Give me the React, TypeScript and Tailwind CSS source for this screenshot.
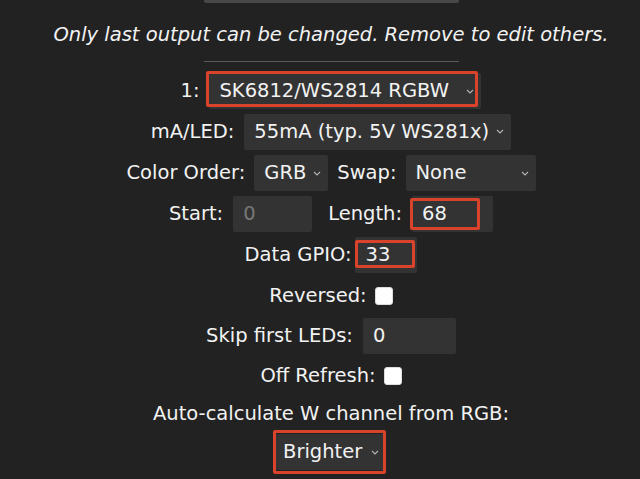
import React from "react";

const font = { fontFamily: '"DejaVu Sans", Verdana, sans-serif' };

const Chevron = () => (
  <svg width="8" height="5" viewBox="0 0 8 5" className="shrink-0">
    <path d="M1 1 L4 4 L7 1" fill="none" stroke="#b5b5b5" strokeWidth="1.1" />
  </svg>
);

const Mark: React.FC<{ className: string }> = ({ className }) => (
  <div className={"absolute border-[3px] border-[#d9432c] rounded-[2px] pointer-events-none " + className} />
);

const Select: React.FC<{ value: string; w: string; mark?: string; pl?: string }> = ({ value, w, mark, pl = "pl-[10px]" }) => (
  <div className={"relative h-[36px] bg-[#333] rounded-[2px] flex items-center justify-between pr-[7px] " + pl + " " + w}>
    <span className="text-[#f2f2f2] whitespace-nowrap">{value}</span>
    <Chevron />
    {mark && <Mark className={mark} />}
  </div>
);

const Input: React.FC<{ value: string; w: string; dim?: boolean; mark?: string }> = ({ value, w, dim, mark }) => (
  <div className={"relative h-[36px] bg-[#333] rounded-[2px] flex items-center pl-[10px] " + w}>
    <span className={dim ? "text-[#777]" : "text-[#f2f2f2]"}>{value}</span>
    {mark && <Mark className={mark} />}
  </div>
);

const Check = () => <div className="w-[18px] h-[18px] bg-white rounded-[3px] border border-[#ddd]" />;

const Row: React.FC<{ children: React.ReactNode; h: string; gap?: string }> = ({ children, h, gap = "gap-[10px]" }) => (
  <div className={"flex items-center justify-center " + h + " " + gap}>{children}</div>
);

export default function App() {
  return (
    <div className="w-[640px] h-[479px] overflow-hidden bg-[#222] text-[#f2f2f2] text-[19.5px] pl-[22px]" style={font}>
      <div className="flex flex-col items-center">
        <div className="w-[255px] h-[3px] bg-[#474747] rounded-b-[2px]" />
        <p className="mt-[19px] leading-[26px] italic whitespace-nowrap">
          Only last output can be changed. Remove to edit others.
        </p>
        <div className="mt-[13px] w-[255px] h-px bg-[#5a5a5a]" />
        <div className="mt-[9px] flex flex-col">
          <Row h="h-[40px]">
            <span>1:</span>
            <Select value="SK6812/WS2814 RGBW" w="w-[272px]" mark="-left-[3px] -top-[2px] right-[3px] bottom-[2px]" />
          </Row>
          <Row h="h-[41px]">
            <span>mA/LED:</span>
            <Select value="55mA (typ. 5V WS281x)" w="w-[267px]" />
          </Row>
          <Row h="h-[42px]" gap="gap-[9px]">
            <span>Color Order:</span>
            <Select value="GRB" w="w-[74px]" />
            <span>Swap:</span>
            <Select value="None" w="w-[130px]" />
          </Row>
          <Row h="h-[40px]">
            <span>Start:</span>
            <Input value="0" w="w-[79px]" dim />
            <span className="ml-[6px]">Length:</span>
            <Input value="68" w="w-[81px]" mark="-left-[2px] top-[2px] right-[13px] bottom-[2px]" />
          </Row>
          <Row h="h-[42px]" gap="gap-[4px]">
            <span>Data GPIO:</span>
            <Input value="33" w="w-[62px]" mark="left-0 top-[3px] right-[2px] bottom-[5px]" />
          </Row>
          <Row h="h-[40px]" gap="gap-[8px]">
            <span>Reversed:</span>
            <Check />
          </Row>
          <Row h="h-[40px]">
            <span>Skip first LEDs:</span>
            <Input value="0" w="w-[93px]" />
          </Row>
          <Row h="h-[40px]" gap="gap-[8px]">
            <span>Off Refresh:</span>
            <Check />
          </Row>
          <Row h="h-[36px]">
            <span>Auto-calculate W channel from RGB:</span>
          </Row>
          <Row h="h-[40px]">
            <Select value="Brighter" w="w-[110px]" pl="pl-[7px]" mark="-left-[3px] -top-[4px] right-0 -bottom-[4px]" />
          </Row>
        </div>
      </div>
    </div>
  );
}
